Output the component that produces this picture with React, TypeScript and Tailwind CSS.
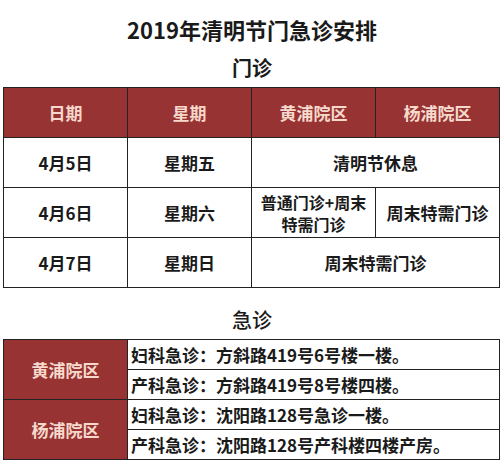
import React from "react";

const font = { fontFamily: '"Noto Sans CJK SC", "Noto Sans", sans-serif' };

const clinicRows = [
  { date: "4月5日", week: "星期五", merged: "清明节休息" },
  { date: "4月6日", week: "星期六", hp: ["普通门诊+周末", "特需门诊"], yp: "周末特需门诊" },
  { date: "4月7日", week: "星期日", merged: "周末特需门诊" },
];

const emergency = [
  {
    campus: "黄浦院区",
    lines: ["妇科急诊：方斜路419号6号楼一楼。", "产科急诊：方斜路419号8号楼四楼。"],
  },
  {
    campus: "杨浦院区",
    lines: ["妇科急诊：沈阳路128号急诊一楼。", "产科急诊：沈阳路128号产科楼四楼产房。"],
  },
];

export default function App() {
  return (
    <div className="w-[504px] h-[464px] bg-white text-[#1a1a1a] flex flex-col items-center overflow-hidden" style={font}>
      <h1 className="pt-[18px] text-[22px] leading-[22px] font-bold">2019年清明节门急诊安排</h1>
      <h2 className="mt-[18px] text-[20px] leading-[20px] font-bold">门诊</h2>

      <table className="mt-[9px] w-[497px] ml-[3px] self-start border-collapse table-fixed text-[17px] font-bold">
        <colgroup>
          <col className="w-[124px]" />
          <col className="w-[124px]" />
          <col className="w-[124px]" />
          <col className="w-[124px]" />
        </colgroup>
        <thead>
          <tr className="h-[50px] bg-[#983333] text-[#f6d9cc]">
            {["日期", "星期", "黄浦院区", "杨浦院区"].map((h) => (
              <th key={h} className="border border-[#222] text-center font-bold">
                {h}
              </th>
            ))}
          </tr>
        </thead>
        <tbody>
          {clinicRows.map((r) => (
            <tr key={r.date} className="h-[50px]">
              <td className="border border-[#222] text-center">{r.date}</td>
              <td className="border border-[#222] text-center">{r.week}</td>
              {r.merged ? (
                <td colSpan={2} className="border border-[#222] text-center">
                  {r.merged}
                </td>
              ) : (
                <>
                  <td className="border border-[#222] text-center text-[16px] leading-[22px]">
                    {r.hp?.[0]}
                    <br />
                    {r.hp?.[1]}
                  </td>
                  <td className="border border-[#222] text-center">{r.yp}</td>
                </>
              )}
            </tr>
          ))}
        </tbody>
      </table>

      <h2 className="mt-[22px] text-[20px] leading-[20px] font-medium">急诊</h2>

      <table className="mt-[9px] w-[497px] ml-[3px] self-start border-collapse table-fixed text-[17px] font-bold">
        <colgroup>
          <col className="w-[124px]" />
          <col className="w-[372px]" />
        </colgroup>
        <tbody>
          {emergency.map((g) =>
            g.lines.map((line, i) => (
              <tr key={line} className="h-[30px]">
                {i === 0 && (
                  <td rowSpan={2} className="border border-[#222] bg-[#983333] text-[#f6d9cc] text-center">
                    {g.campus}
                  </td>
                )}
                <td className="border border-[#222] pl-[3px] text-left whitespace-nowrap">{line}</td>
              </tr>
            ))
          )}
        </tbody>
      </table>
    </div>
  );
}
